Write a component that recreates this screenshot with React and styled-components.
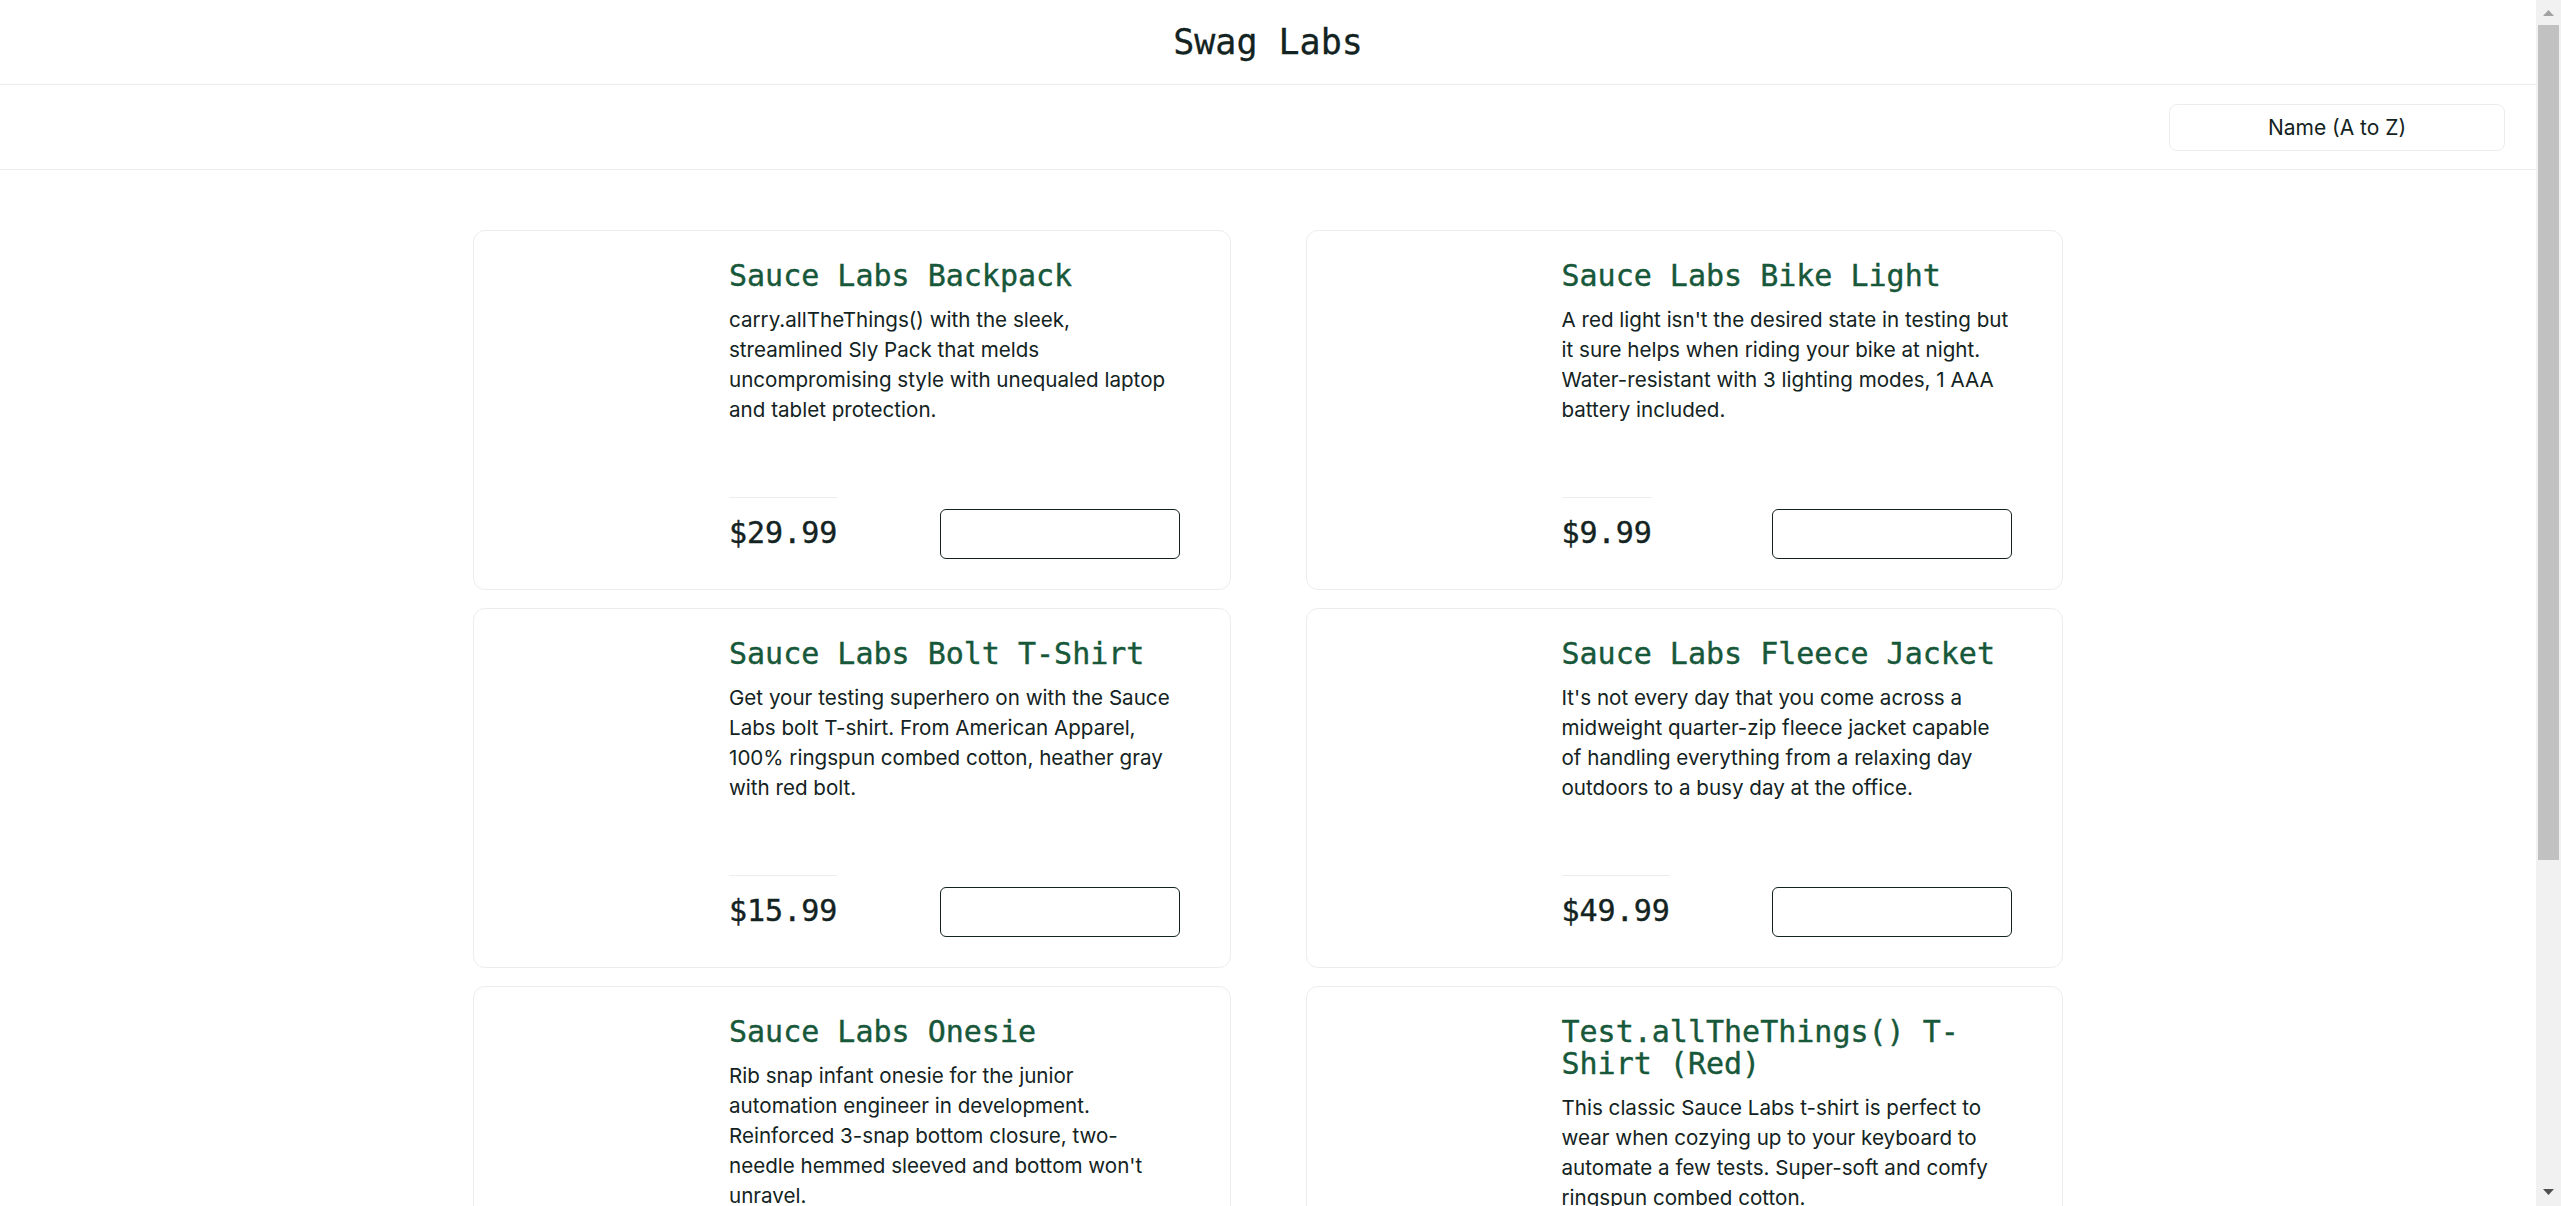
import React from "react";
import styled, { createGlobalStyle } from "styled-components";

const GlobalStyle = createGlobalStyle`
  html, body {
    margin: 0;
    padding: 0;
    background: #ffffff;
    overflow: hidden;
  }
  body {
    font-family: Inter, "Noto Sans", "Liberation Sans", sans-serif;
    color: #132322;
  }
  * { box-sizing: border-box; }
`;

const Shell = styled.div`
  display: flex;
  height: 100vh;
  overflow: hidden;
`;

const Viewport = styled.div`
  flex: 1;
  min-width: 0;
  height: 100%;
  overflow-y: auto;
  scrollbar-width: none;
  &::-webkit-scrollbar {
    display: none;
  }
`;

const ScrollBar = styled.div`
  flex: none;
  width: 25px;
  height: 100%;
  background: #f1f1f1;
  display: flex;
  flex-direction: column;
`;

const ScrollButton = styled.div`
  flex: none;
  height: 25px;
  display: flex;
  justify-content: center;
  align-items: flex-start;
  padding-top: ${(p) => (p.$down ? "8px" : "10px")};
`;

const ScrollTrack = styled.div`
  flex: 1;
  padding: 0 2px;
`;

const ScrollThumb = styled.div`
  height: 835px;
  background: #c1c1c1;
`;

const Page = styled.div`
  padding-bottom: 324px;
`;

const PrimaryHeader = styled.header`
  height: 85px;
  border-bottom: 1px solid #ededed;
  display: flex;
  align-items: center;
  justify-content: center;
`;

const AppLogo = styled.div`
  font-family: "DejaVu Sans Mono", "Liberation Mono", monospace;
  font-size: 35px;
  line-height: 35px;
  color: #132322;
  padding-top: 1px;
  -webkit-text-stroke: 0.3px #132322;
`;

const SecondaryHeader = styled.div`
  height: 85px;
  border-bottom: 1px solid #ededed;
  display: flex;
  align-items: center;
  justify-content: flex-end;
  padding-right: 31px;
`;

const SortSelect = styled.select`
  appearance: none;
  -webkit-appearance: none;
  width: 336px;
  height: 47px;
  border: 1px solid #ededed;
  border-radius: 8px;
  background: #ffffff;
  color: #132322;
  font-family: Inter, "Noto Sans", sans-serif;
  font-size: 21px;
  text-align: center;
  text-align-last: center;
  padding: 0 12px;
  outline: none;
`;

const InventoryList = styled.main`
  width: 1590px;
  margin: 60px auto 0;
  display: grid;
  grid-template-columns: repeat(2, minmax(0, 1fr));
  column-gap: 75px;
  row-gap: 18px;
`;

const Card = styled.article`
  display: flex;
  min-width: 0;
  min-height: 360px;
  border: 1px solid #ededed;
  border-radius: 12px;
  padding: 29px 30px 30px 30px;
  background: #ffffff;
`;

const ImageSlot = styled.div`
  flex: none;
  width: 225px;
`;

const Label = styled.div`
  flex: 1;
  min-width: 0;
  display: flex;
  flex-direction: column;
  padding-right: 20px;
`;

const Title = styled.div`
  font-family: "DejaVu Sans Mono", "Liberation Mono", monospace;
  font-size: 30px;
  line-height: 32px;
  color: #18583a;
  -webkit-text-stroke: 0.4px #18583a;
  margin-bottom: 13px;
`;

const Desc = styled.div`
  font-family: Inter, "Noto Sans", sans-serif;
  font-size: 20.6px;
  line-height: 30px;
  color: #132322;
`;

const DescLine = styled.span`
  display: block;
  white-space: nowrap;
`;

const PriceBar = styled.div`
  margin-top: auto;
  display: flex;
  align-items: flex-end;
  justify-content: space-between;
`;

const Price = styled.div`
  font-family: "DejaVu Sans Mono", "Liberation Mono", monospace;
  font-size: 30px;
  line-height: 32px;
  color: #132322;
  -webkit-text-stroke: 0.4px #132322;
  border-top: 1px solid #ededed;
  padding-top: 19px;
  margin-bottom: 10px;
`;

const CartButton = styled.button`
  flex: none;
  width: 240px;
  height: 50px;
  border: 1px solid #132322;
  border-radius: 6px;
  background: #ffffff;
  padding: 0;
`;

const products = [
  {
    name: ["Sauce Labs Backpack"],
    desc: [
      "carry.allTheThings() with the sleek,",
      "streamlined Sly Pack that melds",
      "uncompromising style with unequaled laptop",
      "and tablet protection.",
    ],
    price: "$29.99",
  },
  {
    name: ["Sauce Labs Bike Light"],
    desc: [
      "A red light isn't the desired state in testing but",
      "it sure helps when riding your bike at night.",
      "Water-resistant with 3 lighting modes, 1 AAA",
      "battery included.",
    ],
    price: "$9.99",
  },
  {
    name: ["Sauce Labs Bolt T-Shirt"],
    desc: [
      "Get your testing superhero on with the Sauce",
      "Labs bolt T-shirt. From American Apparel,",
      "100% ringspun combed cotton, heather gray",
      "with red bolt.",
    ],
    price: "$15.99",
  },
  {
    name: ["Sauce Labs Fleece Jacket"],
    desc: [
      "It's not every day that you come across a",
      "midweight quarter-zip fleece jacket capable",
      "of handling everything from a relaxing day",
      "outdoors to a busy day at the office.",
    ],
    price: "$49.99",
  },
  {
    name: ["Sauce Labs Onesie"],
    desc: [
      "Rib snap infant onesie for the junior",
      "automation engineer in development.",
      "Reinforced 3-snap bottom closure, two-",
      "needle hemmed sleeved and bottom won't",
      "unravel.",
    ],
    price: "$7.99",
  },
  {
    name: ["Test.allTheThings() T-", "Shirt (Red)"],
    desc: [
      "This classic Sauce Labs t-shirt is perfect to",
      "wear when cozying up to your keyboard to",
      "automate a few tests. Super-soft and comfy",
      "ringspun combed cotton.",
    ],
    price: "$15.99",
  },
];

function Arrow({ down, color }) {
  return (
    <svg width="11" height="6" viewBox="0 0 11 6" aria-hidden="true">
      {down ? (
        <polygon points="0,0 11,0 5.5,6" fill={color} />
      ) : (
        <polygon points="5.5,0 11,6 0,6" fill={color} />
      )}
    </svg>
  );
}

export default function App() {
  return (
    <Shell>
      <GlobalStyle />
      <Viewport>
        <Page>
          <PrimaryHeader>
            <AppLogo>Swag Labs</AppLogo>
          </PrimaryHeader>
          <SecondaryHeader>
            <SortSelect defaultValue="az" aria-label="Sort">
              <option value="az">Name (A to Z)</option>
              <option value="za">Name (Z to A)</option>
              <option value="lohi">Price (low to high)</option>
              <option value="hilo">Price (high to low)</option>
            </SortSelect>
          </SecondaryHeader>
          <InventoryList>
            {products.map((p) => (
              <Card key={p.name.join("")}>
                <ImageSlot />
                <Label>
                  <Title>
                    {p.name.map((n, i) => (
                      <React.Fragment key={i}>
                        {i > 0 && <br />}
                        {n}
                      </React.Fragment>
                    ))}
                  </Title>
                  <Desc>
                    {p.desc.map((line) => (
                      <DescLine key={line}>{line}</DescLine>
                    ))}
                  </Desc>
                  <PriceBar>
                    <Price>{p.price}</Price>
                    <CartButton type="button" aria-label="Add to cart" />
                  </PriceBar>
                </Label>
              </Card>
            ))}
          </InventoryList>
        </Page>
      </Viewport>
      <ScrollBar aria-hidden="true">
        <ScrollButton>
          <Arrow color="#a3a3a3" />
        </ScrollButton>
        <ScrollTrack>
          <ScrollThumb />
        </ScrollTrack>
        <ScrollButton $down>
          <Arrow down color="#505050" />
        </ScrollButton>
      </ScrollBar>
    </Shell>
  );
}
